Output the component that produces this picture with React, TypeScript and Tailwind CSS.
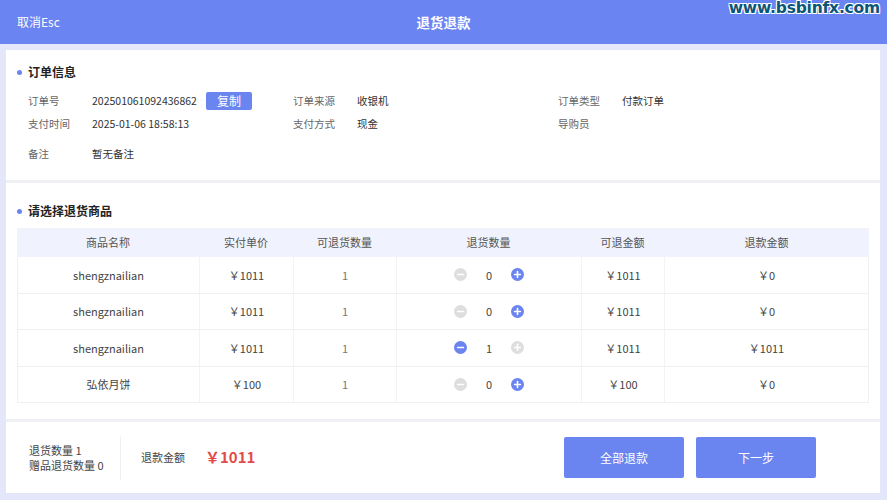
import React from 'react';

type Row = {
  name: string;
  price: string;
  canQty: number;
  qty: number;
  canAmount: string;
  amount: string;
};

const rows: Row[] = [
  { name: 'shengznailian', price: '￥1011', canQty: 1, qty: 0, canAmount: '￥1011', amount: '￥0' },
  { name: 'shengznailian', price: '￥1011', canQty: 1, qty: 0, canAmount: '￥1011', amount: '￥0' },
  { name: 'shengznailian', price: '￥1011', canQty: 1, qty: 1, canAmount: '￥1011', amount: '￥1011' },
  { name: '弘依月饼', price: '￥100', canQty: 1, qty: 0, canAmount: '￥100', amount: '￥0' },
];

const cols = 'grid grid-cols-[182px_94px_103px_185px_83px_1fr]';

function StepIcon({ type, active }: { type: 'minus' | 'plus'; active: boolean }) {
  return (
    <svg width="13" height="13" viewBox="0 0 13 13">
      <circle cx="6.5" cy="6.5" r="6.5" fill={active ? '#6a84f0' : '#dedede'} />
      <line x1="3.6" y1="6.5" x2="9.4" y2="6.5" stroke="#fff" strokeWidth="1.6" strokeLinecap="round" />
      {type === 'plus' && (
        <line x1="6.5" y1="3.6" x2="6.5" y2="9.4" stroke="#fff" strokeWidth="1.6" strokeLinecap="round" />
      )}
    </svg>
  );
}

function SectionTitle({ children }: { children: React.ReactNode }) {
  return (
    <div className="flex items-center gap-[6px] h-[16px]">
      <span className="w-[5px] h-[5px] rounded-full bg-[#6a84f0]" />
      <span className="text-[12px] font-bold text-[#222]">{children}</span>
    </div>
  );
}

function Field({ label, value, children }: { label: string; value?: string; children?: React.ReactNode }) {
  return (
    <div className="flex items-center">
      <span className="w-[64px] text-[#666]">{label}</span>
      {value && <span className="text-[#333]">{value}</span>}
      {children}
    </div>
  );
}

export default function App() {
  return (
    <div className="relative w-full h-[500px] bg-[#e4e6fa] flex flex-col font-['Noto_Sans_CJK_SC','Noto_Sans',sans-serif] overflow-hidden">
      {/* watermark */}
      <div className="absolute right-[7px] top-[-3px] text-[15.5px] font-bold text-[#0b5577] font-['DejaVu_Sans',sans-serif] tracking-[-0.2px] [text-shadow:1px_1px_0_#fff,-1px_-1px_0_#fff,1px_-1px_0_#fff,-1px_1px_0_#fff]">
        www.bsbinfx.com
      </div>

      {/* header */}
      <div className="h-[44px] bg-[#6a84f2] flex items-center px-[17px] text-white shrink-0">
        <span className="text-[12px] w-[120px]">取消Esc</span>
        <span className="flex-1 text-center text-[13.5px] font-bold pr-[120px]">退货退款</span>
      </div>

      <div className="ml-[6px] mr-[7px] mt-[6px] flex flex-col gap-[3px] bg-[#eff0f4]">
        {/* order info */}
        <div className="bg-white h-[130px] pt-[14px] pl-[11px]">
          <SectionTitle>订单信息</SectionTitle>
          <div className="pl-[11px] text-[10.5px]">
            <div className="grid grid-cols-[265px_265px_265px] h-[22px] mt-[10px] items-center">
              <Field label="订单号" value="202501061092436862">
                <span className="ml-[9px] w-[46px] h-[18px] bg-[#6a84f0] text-white text-[12px] rounded-[2px] flex items-center justify-center">
                  复制
                </span>
              </Field>
              <Field label="订单来源" value="收银机" />
              <Field label="订单类型" value="付款订单" />
            </div>
            <div className="grid grid-cols-[265px_265px_265px] h-[24px] items-center">
              <Field label="支付时间" value="2025-01-06 18:58:13" />
              <Field label="支付方式" value="现金" />
              <Field label="导购员" />
            </div>
            <div className="grid grid-cols-[265px_265px_265px] h-[22px] mt-[7px] items-center">
              <Field label="备注" value="暂无备注" />
            </div>
          </div>
        </div>

        {/* goods */}
        <div className="bg-white h-[236px] pt-[20px] px-[11px]">
          <SectionTitle>请选择退货商品</SectionTitle>
          <div className="mt-[9px] text-[11px]">
            <div className={`${cols} h-[29px] bg-[#f0f3fd] text-[#555] items-center text-center`}>
              <span>商品名称</span>
              <span>实付单价</span>
              <span>可退货数量</span>
              <span>退货数量</span>
              <span>可退金额</span>
              <span>退款金额</span>
            </div>
            {rows.map((r, i) => (
              <div
                key={i}
                className={`${cols} h-[36.5px] border-b border-x border-[#f0f0f0] text-center text-[#444]`}
              >
                <span className="flex items-center justify-center border-r border-[#f3f3f3]">{r.name}</span>
                <span className="flex items-center justify-center border-r border-[#f3f3f3]">{r.price}</span>
                <span className="flex items-center justify-center border-r border-[#f3f3f3] text-[#777]">{r.canQty}</span>
                <span className="flex items-center justify-center border-r border-[#f3f3f3] gap-[12px]">
                  <StepIcon type="minus" active={r.qty > 0} />
                  <span className="w-[20px] text-center">{r.qty}</span>
                  <StepIcon type="plus" active={r.qty < r.canQty} />
                </span>
                <span className="flex items-center justify-center border-r border-[#f3f3f3]">{r.canAmount}</span>
                <span className="flex items-center justify-center">{r.amount}</span>
              </div>
            ))}
          </div>
        </div>

        {/* footer */}
        <div className="bg-white h-[71px] flex items-center pl-[23px] pr-[64px] text-[11px] text-[#444]">
          <div className="flex flex-col leading-[15px] w-[91px]">
            <span>退货数量 1</span>
            <span>赠品退货数量 0</span>
          </div>
          <div className="w-px h-[44px] bg-[#f0f0f0]" />
          <span className="ml-[20px] text-[#444]">退款金额</span>
          <span className="ml-[20px] text-[15px] font-semibold text-[#e34b4b]">￥1011</span>
          <div className="ml-auto flex gap-[12px]">
            <button className="w-[120px] h-[41px] bg-[#6a84f0] text-white text-[12px] rounded-[2px]">全部退款</button>
            <button className="w-[120px] h-[41px] bg-[#6a84f0] text-white text-[12px] rounded-[2px]">下一步</button>
          </div>
        </div>
      </div>
    </div>
  );
}
